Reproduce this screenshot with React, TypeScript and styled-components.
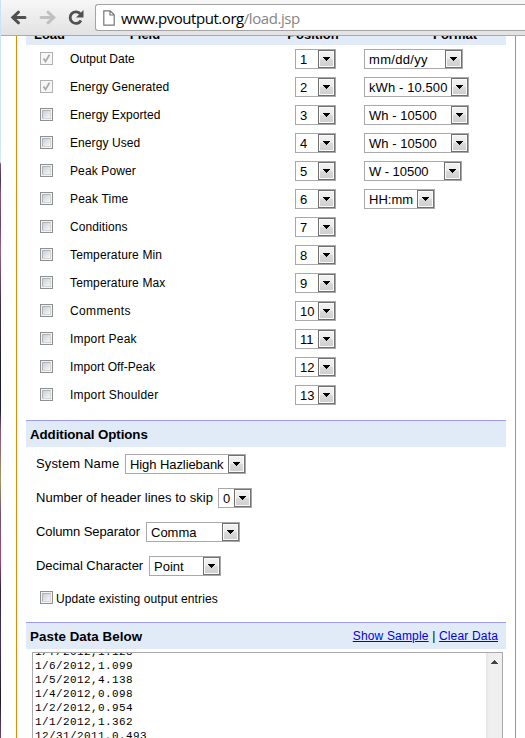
import React from "react";
import styled, { createGlobalStyle } from "styled-components";

const GlobalStyle = createGlobalStyle`
  * { box-sizing: border-box; }
  body { margin: 0; overflow: hidden; background: #fff; color: #000; font-family: "Liberation Sans", Arial, sans-serif; }
`;

const Screen = styled.div`
  display: flex;
  width: 525px;
  height: 738px;
  overflow: hidden;
`;

const Desktop = styled.div`
  flex: 0 0 1px;
  background: linear-gradient(#c5e4fa 0, #cfe9fb 162px, #7d5274 164px, #443250 180px, #8b5274 195px, #6a4470 225px, #9a6480 250px, #493252 300px, #141c3c 370px, #17204a 410px, #8e5272 430px, #a89560 480px, #76506c 515px, #a4476e 560px, #332244 590px, #46306b 640px, #1c1c30 700px, #74406a 738px);
`;

const Browser = styled.div`
  flex: 1;
  display: flex;
  flex-direction: column;
  min-width: 0;
`;

const Toolbar = styled.header`
  flex: 0 0 36px;
  display: flex;
  align-items: flex-start;
  background: linear-gradient(#f7f7f7, #e2e2e2);
  border-bottom: 1px solid #aaa;
`;

const NavIcons = styled.svg`
  flex: 0 0 94px;
  height: 35px;
`;

const AddressBar = styled.div`
  flex: 1;
  display: flex;
  align-items: center;
  height: 27px;
  margin-top: 4px;
  padding-left: 7px;
  background: #fff;
  border: 1px solid #a4a4a4;
  border-right: 0;
  border-radius: 3px 0 0 3px;
`;

const PageIcon = styled.svg`
  width: 12px;
  height: 16px;
`;

const Url = styled.span`
  margin-left: 6px;
  font: 15px/22px "Open Sans", sans-serif;
  letter-spacing: -0.45px;
  white-space: nowrap;
`;

const UrlPath = styled.span`
  color: #858585;
`;

const Page = styled.main`
  flex: 1;
  width: 500px;
  margin-left: 15px;
  padding: 0 9px;
  border: solid #e68a00;
  border-width: 0 1px;
  overflow: hidden;
`;

const ColumnHeads = styled.div`
  display: grid;
  grid-template-columns: 44px 150px 186px 1fr;
  height: 9px;
  background: #e0ebf7;
  overflow: hidden;
  font-weight: bold;
  font-size: 13px;
  line-height: 15px;
  text-align: center;
`;

const HeadText = styled.span<{ $left?: number; $right?: number }>`
  margin-top: -9px;
  padding-left: ${(p) => p.$left ?? 0}px;
  padding-right: ${(p) => p.$right ?? 0}px;
`;

const FieldRow = styled.div`
  display: grid;
  grid-template-columns: 44px 225px 69px 1fr;
  align-items: center;
  width: 480px;
  height: 28px;
`;

const Label = styled.span<{ $spacing?: number; $size?: number }>`
  font-size: ${(p) => p.$size ?? 12}px;
  line-height: 16px;
  letter-spacing: ${(p) => p.$spacing ?? 0}px;
  white-space: nowrap;
`;

const CheckFrame = styled.span<{ $disabled?: boolean; $lift?: number }>`
  display: grid;
  place-items: center;
  flex: 0 0 13px;
  width: 13px;
  height: 13px;
  margin: 0 0 ${(p) => p.$lift ?? 1}px 14px;
  border: 1px solid ${(p) => (p.$disabled ? "#b1b1b1" : "#8e8f8f")};
  background: ${(p) => (p.$disabled ? "#f6f6f6" : "#f4f4f4")};
`;

const CheckWell = styled.span`
  width: 9px;
  height: 9px;
  border: 1px solid #aeb3b9;
  border-right-color: #d3d6d9;
  border-bottom-color: #d3d6d9;
  background: linear-gradient(135deg, #cbcfd5, #f6f6f6);
`;

const CheckMark = styled.svg`
  width: 11px;
  height: 11px;
`;

const SelectBox = styled.span<{ $width: number; $spacing?: number; $inset?: number }>`
  display: flex;
  justify-content: space-between;
  width: ${(p) => p.$width}px;
  height: 20px;
  padding-left: ${(p) => p.$inset ?? 4}px;
  border: 1px solid #a9a9ad;
  background: #fff;
  font-size: 13px;
  line-height: 19px;
  letter-spacing: ${(p) => p.$spacing ?? 0}px;
  white-space: nowrap;
`;

const SelectButton = styled.span`
  display: grid;
  place-items: center;
  flex: 0 0 17px;
  height: 18px;
  border: 1px solid #707070;
  background: linear-gradient(#f2f2f2, #ebebeb 49%, #dadada 50%, #cecece);
  box-shadow: inset 0 0 0 1px #fafafa;
`;

const Arrow = styled.svg`
  width: 7px;
  height: 4px;
`;

const SectionBar = styled.h2<{ $top: number; $spacing: number }>`
  display: flex;
  justify-content: space-between;
  align-items: center;
  height: 27px;
  margin: ${(p) => p.$top}px 0 0;
  padding: 0 8px 0 4px;
  border-top: 1px solid #9b9bf3;
  background: #e0ebf7;
  font-size: 13.33px;
  letter-spacing: ${(p) => p.$spacing}px;
`;

const Links = styled.span`
  font-size: 12px;
  font-weight: normal;
  letter-spacing: 0.17px;
`;

const Link = styled.a`
  color: #00e;
  text-decoration: underline;
`;

const Options = styled.div`
  padding-left: 10px;
`;

const Option = styled.div`
  display: flex;
  align-items: center;
  height: 34px;
`;

const OptionLabel = styled(Label)<{ $width: number }>`
  flex: 0 0 ${(p) => p.$width}px;
`;

const UpdateOption = styled.div`
  display: flex;
  align-items: center;
  gap: 3px;
  height: 32px;
  margin-left: -10px;
`;

const DataBox = styled.div`
  display: flex;
  justify-content: space-between;
  width: 471px;
  height: 200px;
  margin: 3px 0 0 6px;
  border: 1px solid #a9a9ad;
  overflow: hidden;
`;

const DataText = styled.pre`
  margin: -8px 0 0 2px;
  font: 11px/14px "Liberation Mono", "Courier New", monospace;
  letter-spacing: 0.4px;
`;

const Scrollbar = styled.div`
  flex: 0 0 16px;
  display: flex;
  justify-content: center;
  padding-top: 7px;
  background: linear-gradient(90deg, #e3e3e3, #efefef 3px);
`;

type SelectProps = { value: string; width: number; spacing?: number; inset?: number };

const Select = ({ value, width, spacing, inset }: SelectProps) => (
  <SelectBox $width={width} $spacing={spacing} $inset={inset}>
    {value}
    <SelectButton>
      <Arrow viewBox="0 0 7 4" shapeRendering="crispEdges"><path d="M0 0h7v1H6v1H5v1H4v1H3V3H2V2H1V1H0z" /></Arrow>
    </SelectButton>
  </SelectBox>
);

const Checkbox = ({ locked, lift }: { locked?: boolean; lift?: number }) => (
  <CheckFrame $disabled={locked} $lift={lift}>
    {locked ? (
      <CheckMark viewBox="0 0 11 11"><path d="M2.5 5.5 4.5 8.5 8.5 1.8" fill="none" stroke="#a9a9a9" strokeWidth="1.7" /></CheckMark>
    ) : <CheckWell />}
  </CheckFrame>
);

type Field = { name: string; spacing?: number; format?: string; width?: number; locked?: boolean; formatSpacing?: number };

const fields: Field[] = [
  { name: "Output Date", format: "mm/dd/yy", width: 99, locked: true, formatSpacing: 0.3 },
  { name: "Energy Generated", spacing: 0.07, format: "kWh - 10.500", width: 105, locked: true, formatSpacing: 0.1 },
  { name: "Energy Exported", spacing: 0.07, format: "Wh - 10500", width: 105, formatSpacing: 0.05 },
  { name: "Energy Used", spacing: 0.09, format: "Wh - 10500", width: 105, formatSpacing: 0.05 },
  { name: "Peak Power", spacing: 0.12, format: "W - 10500", width: 98, formatSpacing: -0.05 },
  { name: "Peak Time", spacing: 0.2, format: "HH:mm", width: 71 },
  { name: "Conditions", spacing: 0.08 },
  { name: "Temperature Min", spacing: 0.14 },
  { name: "Temperature Max", spacing: 0.14 },
  { name: "Comments", spacing: 0.35 },
  { name: "Import Peak", spacing: 0.18 },
  { name: "Import Off-Peak", spacing: 0.05 },
  { name: "Import Shoulder", spacing: 0.2 },
];

const options = [
  { label: "System Name", spacing: 0.15, labelWidth: 89, value: "High Hazliebank", width: 121, valueSpacing: -0.08 },
  { label: "Number of header lines to skip", spacing: 0.02, labelWidth: 182, value: "0", width: 34 },
  { label: "Column Separator", spacing: -0.1, labelWidth: 110, value: "Comma", width: 94 },
  { label: "Decimal Character", spacing: -0.03, labelWidth: 113, value: "Point", width: 72 },
];

const data = `1/7/2012,1.128
1/6/2012,1.099
1/5/2012,4.138
1/4/2012,0.098
1/2/2012,0.954
1/1/2012,1.362
12/31/2011,0.493`;

export default function App() {
  return (
    <>
      <GlobalStyle />
      <Screen>
        <Desktop />
        <Browser>
          <Toolbar>
            <NavIcons viewBox="1 0 94 35" fill="none">
              <path d="M25 17.5H13M18.5 12.2 12.8 17.5l5.7 5.3" stroke="#505050" strokeWidth="3" strokeLinecap="round" />
              <path d="M41 17.5h12M48 12.2l5.7 5.3-5.7 5.3" stroke="#c0c0c0" strokeWidth="3" strokeLinecap="round" />
              <path d="M80.5 14A5.8 5.8 0 1 0 81 20.5" stroke="#505050" strokeWidth="2.8" />
              <path d="M83.5 10v7.5H76z" fill="#505050" />
            </NavIcons>
            <AddressBar>
              <PageIcon viewBox="0 0 12 16"><path d="M.8.8h6.4l4 4v10.4H.8zM7 .8V5h4.2" fill="none" stroke="#777" strokeWidth="1.2" /></PageIcon>
              <Url>www.pvoutput.org<UrlPath>/load.jsp</UrlPath></Url>
            </AddressBar>
          </Toolbar>
          <Page>
            <ColumnHeads>
              <HeadText $left={3}>Load</HeadText>
              <HeadText>Field</HeadText>
              <HeadText>Position</HeadText>
              <HeadText $right={2}>Format</HeadText>
            </ColumnHeads>
            {fields.map((f, i) => (
              <FieldRow key={f.name}>
                <Checkbox locked={f.locked} />
                <Label $spacing={f.spacing}>{f.name}</Label>
                <Select value={String(i + 1)} width={41} />
                {f.format && <Select value={f.format} width={f.width ?? 99} spacing={f.formatSpacing} />}
              </FieldRow>
            ))}
            <SectionBar $top={11} $spacing={-0.08}>Additional Options</SectionBar>
            <Options>
              {options.map((o) => (
                <Option key={o.label}>
                  <OptionLabel $size={13} $spacing={o.spacing} $width={o.labelWidth}>{o.label}</OptionLabel>
                  <Select value={o.value} width={o.width} spacing={o.valueSpacing} />
                </Option>
              ))}
              <UpdateOption><Checkbox lift={3} /><Label $spacing={0.1}>Update existing output entries</Label></UpdateOption>
            </Options>
            <SectionBar $top={7} $spacing={0.06}>
              Paste Data Below
              <Links><Link>Show Sample</Link> | <Link>Clear Data</Link></Links>
            </SectionBar>
            <DataBox>
              <DataText>{data}</DataText>
              <Scrollbar><Arrow viewBox="0 0 7 4" shapeRendering="crispEdges"><path d="M3 0h1v1h1v1h1v1h1v1H0V3h1V2h1V1h1z" fill="#444" /></Arrow></Scrollbar>
            </DataBox>
          </Page>
        </Browser>
      </Screen>
    </>
  );
}
